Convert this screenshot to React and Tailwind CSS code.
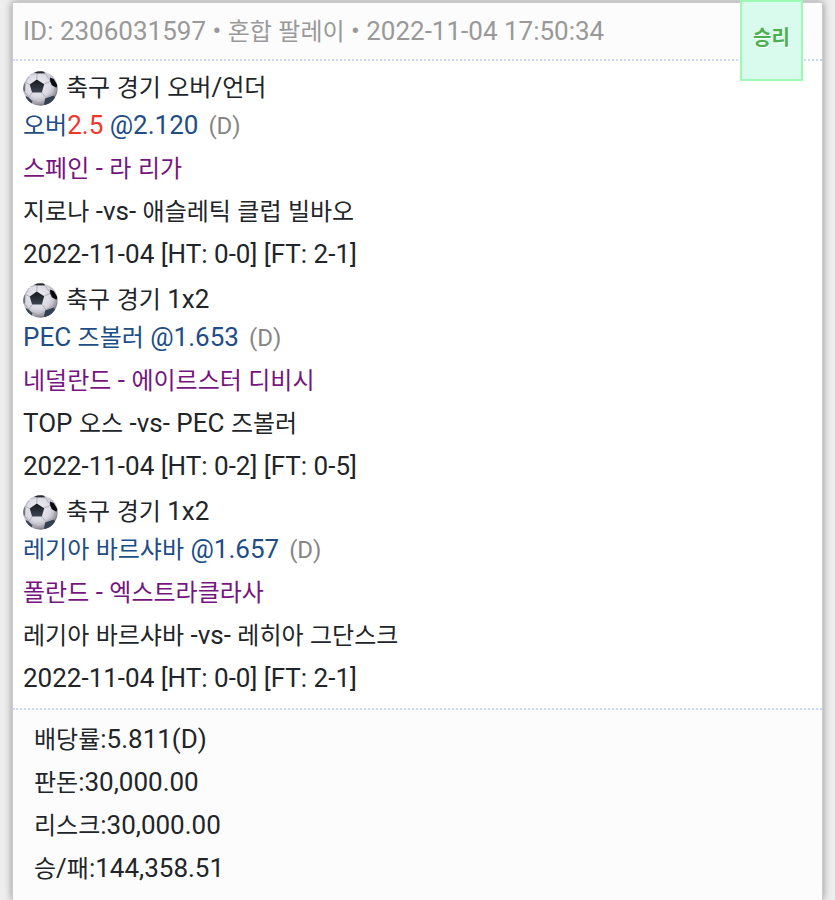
import React from "react";

const bets = [
  {
    market: "축구 경기 오버/언더",
    pick: "오버",
    line: "2.5",
    odds: "@2.120",
    league: "스페인 - 라 리가",
    match: "지로나 -vs- 애슬레틱 클럽 빌바오",
    score: "2022-11-04 [HT: 0-0] [FT: 2-1]",
  },
  {
    market: "축구 경기 1x2",
    pick: "PEC 즈볼러",
    odds: "@1.653",
    league: "네덜란드 - 에이르스터 디비시",
    match: "TOP 오스 -vs- PEC 즈볼러",
    score: "2022-11-04 [HT: 0-2] [FT: 0-5]",
  },
  {
    market: "축구 경기 1x2",
    pick: "레기아 바르샤바",
    odds: "@1.657",
    league: "폴란드 - 엑스트라클라사",
    match: "레기아 바르샤바 -vs- 레히아 그단스크",
    score: "2022-11-04 [HT: 0-0] [FT: 2-1]",
  },
];

const totals = [
  { label: "배당률", value: "5.811(D)" },
  { label: "판돈", value: "30,000.00" },
  { label: "리스크", value: "30,000.00" },
  { label: "승/패", value: "144,358.51" },
];

// Hangul looks larger than Latin at the same size, so it is set a step smaller
function Mixed({ children }) {
  return children.split(/([가-힣]+)/).map((part, i) =>
    i % 2 === 1 ? (
      <span key={i} className="text-[24px] leading-none">
        {part}
      </span>
    ) : (
      part
    )
  );
}

function SoccerBall() {
  const id = React.useId();

  return (
    <svg viewBox="0 0 104 104" className="w-[35px] h-[35px] shrink-0" aria-hidden="true">
      <defs>
        <radialGradient id={`${id}-ball`} cx="0.42" cy="0.38" r="0.62">
          <stop offset="0" stopColor="#f0eff6" />
          <stop offset="0.6" stopColor="#dad9e2" />
          <stop offset="0.85" stopColor="#b3b2bd" />
          <stop offset="1" stopColor="#77767f" />
        </radialGradient>
        <linearGradient id={`${id}-patch`} x1="0" y1="0" x2="0" y2="1">
          <stop offset="0" stopColor="#15181c" />
          <stop offset="1" stopColor="#3a4450" />
        </linearGradient>
        <clipPath id={`${id}-clip`}>
          <circle cx="52" cy="52" r="51" />
        </clipPath>
      </defs>
      <circle cx="52" cy="52" r="51" fill={`url(#${id}-ball)`} />
      <g clipPath={`url(#${id}-clip)`}>
        <g fill="none" stroke="#9a99a3" strokeWidth="2">
          <path d="M41 25 L42 7 M63 39 L82 30 M56 64 L69 80 M27 64 L17 78 M20 40 L7 34" />
          <path d="M42 7 L22 10 M42 7 L66 8 L82 30 L85 42 M69 80 L90 67 L97 48 M69 80 L66 88 L46 95 L27 88 M17 78 L5 62 L7 34 L18 16" />
        </g>
        <path d="M41 25 L63 39 L56 64 L27 64 L20 40 Z" fill={`url(#${id}-patch)`} />
        <path d="M28 4 L42 7 L66 7 L60 0 L34 0 Z" fill="#25282d" />
        <path d="M80 19 L91 24 L103 43 L99 50 L86 42 L81 31 Z" fill="#08090b" />
        <path d="M66 82 L91 73 L96 80 L76 100 L62 100 Z" fill="#334052" />
        <path d="M8 74 L16 78 L28 89 L26 98 L10 88 Z" fill="#3b4553" />
        <path d="M0 40 L5 35 L5 60 L0 62 Z" fill="#4a4e57" />
      </g>
    </svg>
  );
}

function Bet({ bet }) {
  return (
    <section className="pt-2">
      <div className="flex items-center gap-2 h-8">
        <SoccerBall />
        <h2 className="pb-[2px]">
          <Mixed>{bet.market}</Mixed>
        </h2>
      </div>
      <p className="text-[#204d86]">
        <Mixed>{bet.pick}</Mixed>
        {bet.line && <span className="text-[#f0352b]">{bet.line}</span>} {bet.odds}
        <span className="ml-[10px] text-[24px] leading-none text-[#868686]">(D)</span>
      </p>
      <p className="text-[#76147e]">
        <Mixed>{bet.league}</Mixed>
      </p>
      <p>
        <Mixed>{bet.match}</Mixed>
      </p>
      <p>{bet.score}</p>
    </section>
  );
}

export default function App() {
  return (
    <div className="min-h-screen flex flex-col bg-[#eeeeee] px-3 pt-[2px] font-['Roboto','Noto_Sans_CJK_KR',sans-serif] text-[26px] leading-[43px] text-[#212529]">
      <article className="relative grow flex flex-col bg-white border border-b-0 border-[#cccccc] shadow-[0_0_8px_rgba(0,0,0,0.4)]">
        {/* Header */}
        <header className="bg-[#fcfcfc] border-b-2 border-dotted border-[#ccd8fb] pl-[10px] pr-24 pt-[7px] pb-[6px] text-[#999999]">
          <Mixed>ID: 2306031597 • 혼합 팔레이 • 2022-11-04 17:50:34</Mixed>
        </header>
        <div className="absolute -top-[3px] right-[19px] w-[63px] h-[81px] pb-1 flex items-center justify-center bg-[#d8fbee] border-2 border-[#9dfab2] text-[20px] font-bold text-[#4caf50] [text-shadow:1px_1px_0_#ffffff]">
          승리
        </div>

        {/* Bets */}
        <div className="px-[10px] pt-[3px] pb-2">
          {bets.map((bet) => (
            <Bet key={bet.match} bet={bet} />
          ))}
        </div>

        {/* Totals */}
        <footer className="grow bg-[#fcfcfc] border-t-2 border-dotted border-[#ccd8fb] px-[21px] py-2">
          {totals.map((row) => (
            <p key={row.label}>
              <Mixed>{`${row.label}:${row.value}`}</Mixed>
            </p>
          ))}
        </footer>
      </article>
    </div>
  );
}
